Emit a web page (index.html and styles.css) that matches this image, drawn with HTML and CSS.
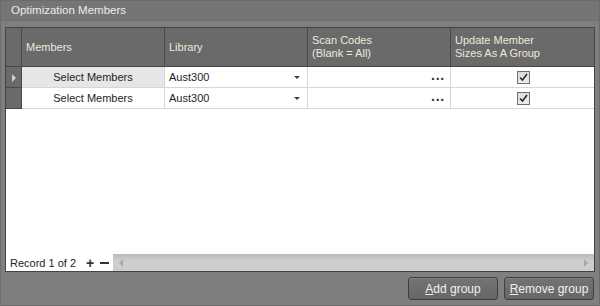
FILE: index.html
```html
<!DOCTYPE html>
<html lang="en">
<head>
  <meta charset="UTF-8">
  <title>Optimization Members</title>
  <link rel="stylesheet" href="styles.css">
</head>
<body>
  <div class="panel">
    <div class="title">Optimization Members</div>
    <div class="content">
      <div class="grid">
        <div class="head">
          <div class="cell ind"></div>
          <div class="cell">Members</div>
          <div class="cell">Library</div>
          <div class="cell">Scan Codes<br>(Blank = All)</div>
          <div class="cell last">Update Member<br>Sizes As A Group</div>
        </div>

        <div class="row">
          <div class="cell ind"><span class="arrow"></span></div>
          <div class="cell member focused">Select Members</div>
          <div class="cell lib">Aust300<span class="drop"></span></div>
          <div class="cell scan"><span class="dots">&middot;&middot;&middot;</span></div>
          <div class="cell check last">
            <span class="box"><svg width="9" height="9" viewBox="0 0 9 9"><path d="M1 4.5 L3.5 7 L8 1" fill="none" stroke="#2a2a2a" stroke-width="1.6"/></svg></span>
          </div>
        </div>
        <div class="row">
          <div class="cell ind"></div>
          <div class="cell member">Select Members</div>
          <div class="cell lib">Aust300<span class="drop"></span></div>
          <div class="cell scan"><span class="dots">&middot;&middot;&middot;</span></div>
          <div class="cell check last">
            <span class="box"><svg width="9" height="9" viewBox="0 0 9 9"><path d="M1 4.5 L3.5 7 L8 1" fill="none" stroke="#2a2a2a" stroke-width="1.6"/></svg></span>
          </div>
        </div>

        <div class="empty"></div>

        <div class="footer">
          <div class="nav">
            Record 1 of 2
            <span class="btn-plus">+</span>
            <span class="btn-minus"></span>
          </div>
          <div class="scroll">
            <span class="sarrow left"></span>
            <span class="sarrow right"></span>
          </div>
        </div>
      </div>

      <div class="actions">
        <button class="action"><u>A</u>dd group</button>
        <button class="action"><u>R</u>emove group</button>
      </div>
    </div>
  </div>
</body>
</html>
```

FILE: styles.css
```css
body {
  margin: 0;
  background: #7f7f7f;
  font-family: "Liberation Sans", Arial, sans-serif;
  font-size: 11px;
}

.panel {
  width: 600px;
  height: 306px;
  box-sizing: border-box;
  border: 1px solid #6c6c6c;
  display: flex;
  flex-direction: column;
}

.title {
  height: 19px;
  line-height: 19px;
  padding-left: 10px;
  color: #ececec;
  font-size: 11.5px;
  background: #757575;
  border-bottom: 1px solid #6e6e6e;
}

.content {
  flex: 1;
  display: flex;
  flex-direction: column;
  padding: 6px 4px 4px 4px;
}

.grid {
  height: 243px;
  border: 1px solid #444444;
  background: #ffffff;
  display: flex;
  flex-direction: column;
}

.head, .row {
  display: grid;
  grid-template-columns: 16px 143px 143px 143px 1fr;
}

.head {
  height: 38px;
  background: #6a6a6a;
  color: #efe8da;
  border-bottom: 1px solid #464646;
}

.head .cell {
  border-right: 1px solid #484848;
  padding-left: 4px;
  display: flex;
  align-items: center;
  line-height: 13px;
}

.head .cell.last, .row .cell.last {
  border-right: none;
}

.head .cell.ind, .row .cell.ind {
  padding: 0;
}

.row {
  height: 20px;
  color: #1e1e1e;
  border-bottom: 1px solid #d6d6d6;
}

.row .cell {
  border-right: 1px solid #d6d6d6;
  display: flex;
  align-items: center;
  position: relative;
}

.row .cell.ind {
  background: #6a6a6a;
  border-right: 1px solid #484848;
  box-shadow: inset 0 -1px 0 #484848;
  margin-bottom: -1px;
}

.arrow {
  width: 0;
  height: 0;
  margin-left: 6px;
  border-top: 4px solid transparent;
  border-bottom: 4px solid transparent;
  border-left: 4px solid #cfcfcf;
}

.member {
  justify-content: center;
}

.member.focused {
  background: #e6e6e6;
}

.lib {
  padding-left: 4px;
}

.drop {
  position: absolute;
  right: 7px;
  top: 9px;
  width: 0;
  height: 0;
  border-left: 3px solid transparent;
  border-right: 3px solid transparent;
  border-top: 3px solid #404040;
}

.scan {
  justify-content: flex-end;
}

.dots {
  margin-right: 5px;
  font-weight: bold;
  font-size: 14px;
  color: #333333;
  line-height: 10px;
  margin-top: 4px;
}

.check {
  justify-content: center;
}

.box {
  width: 11px;
  height: 11px;
  border: 1px solid #707070;
  background: linear-gradient(#dcdcdc, #ececec);
  display: flex;
  align-items: center;
  justify-content: center;
  margin-left: 2px;
}

.empty {
  flex: 1;
}

.footer {
  height: 17px;
  display: flex;
}

.nav {
  width: 103px;
  padding-left: 4px;
  color: #1e1e1e;
  font-size: 11px;
  display: flex;
  align-items: center;
}

.btn-plus {
  margin-left: 10px;
  font-weight: bold;
  font-size: 14px;
  color: #333333;
}

.btn-minus {
  margin-left: 6px;
  width: 9px;
  height: 2px;
  background: #333333;
}

.scroll {
  flex: 1;
  background: linear-gradient(#bbbbbb, #cdcdcd 40%, #cecece);
  display: flex;
  align-items: center;
  justify-content: space-between;
  padding: 0 6px;
}

.sarrow {
  width: 0;
  height: 0;
  border-top: 4px solid transparent;
  border-bottom: 4px solid transparent;
}

.sarrow.left {
  border-right: 4px solid #a9a9a9;
}

.sarrow.right {
  border-left: 4px solid #a9a9a9;
}

.actions {
  display: flex;
  justify-content: flex-end;
  gap: 6px;
  margin-top: 5px;
  padding-right: 1px;
}

.action {
  width: 90px;
  height: 23px;
  padding: 0;
  font-family: "Liberation Sans", Arial, sans-serif;
  font-size: 12px;
  color: #f0f0f0;
  background: linear-gradient(#747474, #666666);
  border: 1px solid #3e3e3e;
  border-radius: 3px;
  box-shadow: inset 0 1px 0 #808080;
}
```
